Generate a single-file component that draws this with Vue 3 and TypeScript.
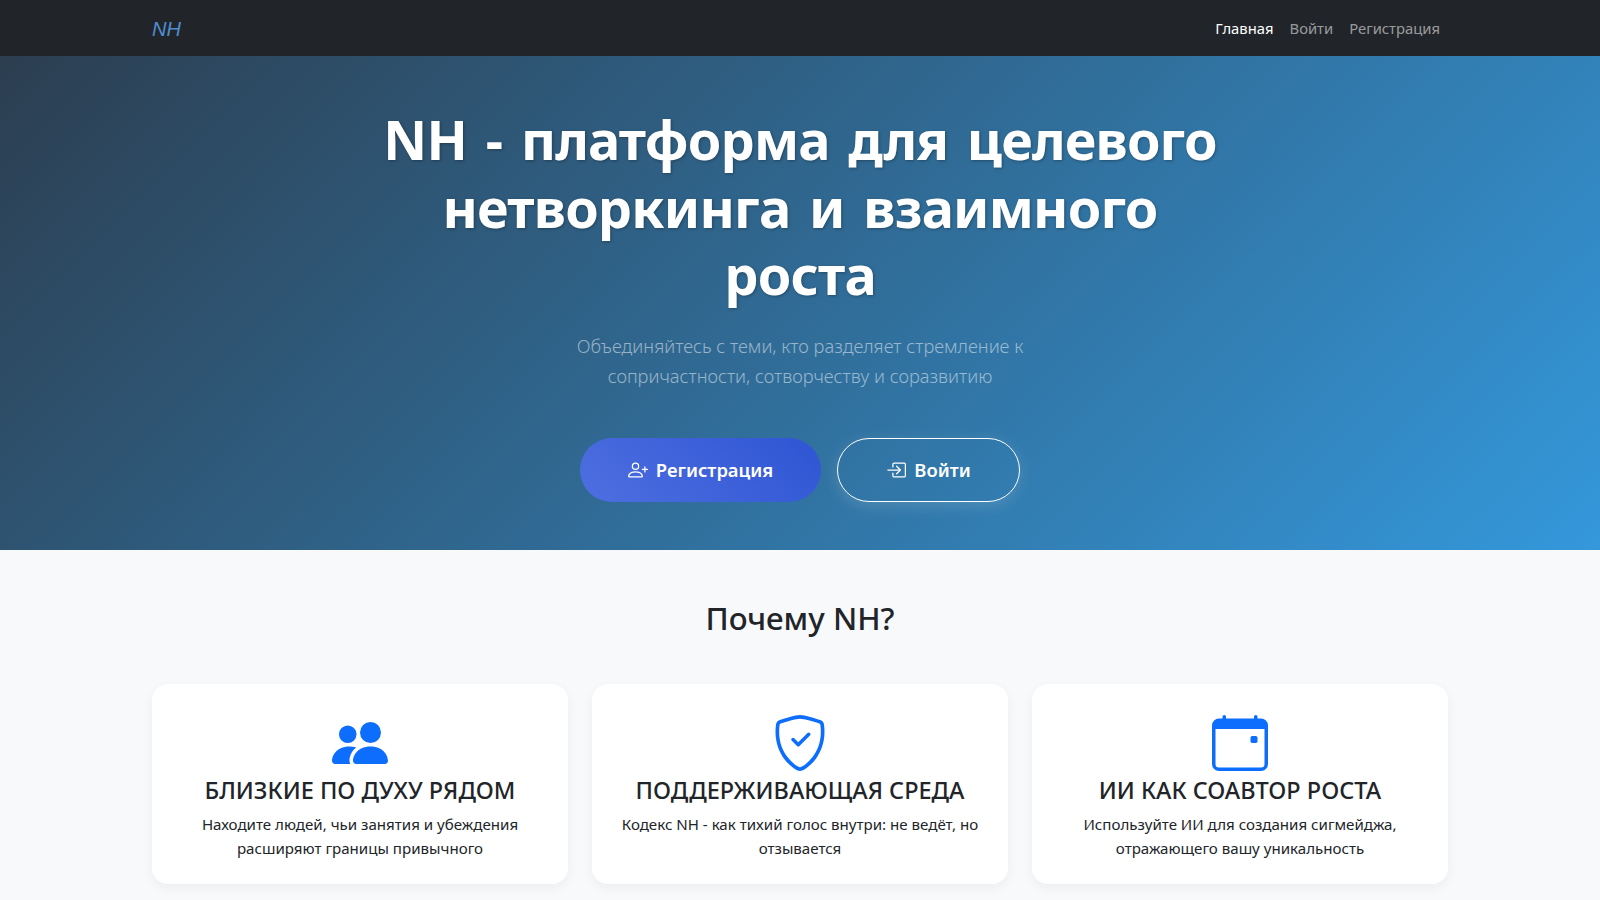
<template>
  <nav class="navbar">
    <div class="container nav-inner">
      <a class="brand" href="#">NH</a>
      <ul class="nav-links">
        <li v-for="link in links" :key="link.label">
          <a href="#" :class="{ active: link.active }">{{ link.label }}</a>
        </li>
      </ul>
    </div>
  </nav>

  <header class="hero">
    <h1>NH - платформа для целевого<br>нетворкинга и взаимного<br>роста</h1>
    <p class="lead">Объединяйтесь с теми, кто разделяет стремление к<br>сопричастности, сотворчеству и соразвитию</p>
    <div class="actions">
      <a class="btn btn-primary" href="#">
        <svg class="btn-icon" viewBox="0 0 16 16" fill="currentColor">
          <path d="M6 8a3 3 0 1 0 0-6 3 3 0 0 0 0 6zm2-3a2 2 0 1 1-4 0 2 2 0 0 1 4 0zm4 8c0 1-1 1-1 1H1s-1 0-1-1 1-4 6-4 6 3 6 4zm-1-.004c-.001-.246-.154-.986-.832-1.664C9.516 10.68 8.289 10 6 10c-2.29 0-3.516.68-4.168 1.332-.678.678-.83 1.418-.832 1.664h10z"/>
          <path fill-rule="evenodd" d="M13.5 5a.5.5 0 0 1 .5.5V7h1.5a.5.5 0 0 1 0 1H14v1.5a.5.5 0 0 1-1 0V8h-1.5a.5.5 0 0 1 0-1H13V5.5a.5.5 0 0 1 .5-.5z"/>
        </svg>
        Регистрация
      </a>
      <a class="btn btn-outline" href="#">
        <svg class="btn-icon" viewBox="0 0 16 16" fill="currentColor">
          <path fill-rule="evenodd" d="M6 3.5a.5.5 0 0 1 .5-.5h8a.5.5 0 0 1 .5.5v9a.5.5 0 0 1-.5.5h-8a.5.5 0 0 1-.5-.5v-2a.5.5 0 0 0-1 0v2A1.5 1.5 0 0 0 6.5 14h8a1.5 1.5 0 0 0 1.5-1.5v-9A1.5 1.5 0 0 0 14.5 2h-8A1.5 1.5 0 0 0 5 3.5v2a.5.5 0 0 0 1 0v-2z"/>
          <path fill-rule="evenodd" d="M11.854 8.354a.5.5 0 0 0 0-.708l-3-3a.5.5 0 1 0-.708.708L10.293 7.5H1.5a.5.5 0 0 0 0 1h8.793l-2.147 2.146a.5.5 0 0 0 .708.708l3-3z"/>
        </svg>
        Войти
      </a>
    </div>
  </header>

  <section class="features">
    <div class="container">
      <h2>Почему NH?</h2>
      <div class="cards">
        <div class="card">
          <svg class="card-icon" viewBox="0 0 16 16" fill="currentColor">
            <path d="M7 14s-1 0-1-1 1-4 5-4 5 3 5 4-1 1-1 1H7zm4-6a3 3 0 1 0 0-6 3 3 0 0 0 0 6z"/>
            <path d="M5.216 14A2.238 2.238 0 0 1 5 13c0-1.355.68-2.75 1.936-3.72A6.325 6.325 0 0 0 5 9c-4 0-5 3-5 4s1 1 1 1h4.216z"/>
            <path d="M4.5 8a2.5 2.5 0 1 0 0-5 2.5 2.5 0 0 0 0 5z"/>
          </svg>
          <h3>БЛИЗКИЕ ПО ДУХУ РЯДОМ</h3>
          <p>Находите людей, чьи занятия и убеждения<br>расширяют границы привычного</p>
        </div>
        <div class="card">
          <svg class="card-icon" viewBox="0 0 16 16" fill="currentColor">
            <path d="M5.338 1.59a61.44 61.44 0 0 0-2.837.856.481.481 0 0 0-.328.39c-.554 4.157.726 7.19 2.253 9.188a10.725 10.725 0 0 0 2.287 2.233c.346.244.652.42.893.533.12.057.218.095.293.118a.55.55 0 0 0 .101.025.615.615 0 0 0 .1-.025c.076-.023.174-.061.294-.118.24-.113.547-.29.893-.533a10.726 10.726 0 0 0 2.287-2.233c1.527-1.997 2.807-5.031 2.253-9.188a.48.48 0 0 0-.328-.39c-.651-.213-1.75-.56-2.837-.855C9.552 1.29 8.531 1.067 8 1.067c-.53 0-1.552.223-2.662.524zM5.072.56C6.157.265 7.31 0 8 0s1.843.265 2.928.56c1.11.3 2.229.655 2.887.87a1.54 1.54 0 0 1 1.044 1.262c.596 4.477-.787 7.795-2.465 9.99a11.775 11.775 0 0 1-2.517 2.453 7.159 7.159 0 0 1-1.048.625c-.28.132-.581.24-.829.24s-.548-.108-.829-.24a7.158 7.158 0 0 1-1.048-.625 11.777 11.777 0 0 1-2.517-2.453C1.928 10.487.545 7.169 1.141 2.692A1.54 1.54 0 0 1 2.185 1.43 62.456 62.456 0 0 1 5.072.56z"/>
            <path d="M10.854 5.146a.5.5 0 0 1 0 .708l-3 3a.5.5 0 0 1-.708 0l-1.5-1.5a.5.5 0 1 1 .708-.708L7.5 7.793l2.646-2.647a.5.5 0 0 1 .708 0z"/>
          </svg>
          <h3>ПОДДЕРЖИВАЮЩАЯ СРЕДА</h3>
          <p>Кодекс NH - как тихий голос внутри: не ведёт, но<br>отзывается</p>
        </div>
        <div class="card">
          <svg class="card-icon" viewBox="0 0 16 16" fill="currentColor">
            <path d="M11 6.5a.5.5 0 0 1 .5-.5h1a.5.5 0 0 1 .5.5v1a.5.5 0 0 1-.5.5h-1a.5.5 0 0 1-.5-.5v-1z"/>
            <path d="M3.5 0a.5.5 0 0 1 .5.5V1h8V.5a.5.5 0 0 1 1 0V1h1a2 2 0 0 1 2 2v11a2 2 0 0 1-2 2H2a2 2 0 0 1-2-2V3a2 2 0 0 1 2-2h1V.5a.5.5 0 0 1 .5-.5zM1 4v10a1 1 0 0 0 1 1h12a1 1 0 0 0 1-1V4H1z"/>
          </svg>
          <h3>ИИ КАК СОАВТОР РОСТА</h3>
          <p>Используйте ИИ для создания сигмейджа,<br>отражающего вашу уникальность</p>
        </div>
      </div>
    </div>
  </section>
</template>

<script setup lang="ts">
const links = [
  { label: 'Главная', active: true },
  { label: 'Войти', active: false },
  { label: 'Регистрация', active: false },
]
</script>

<style>
html, body {
  overflow: hidden;
}
body {
  background: #f8f9fa;
}
</style>

<style scoped>
* {
  box-sizing: border-box;
}

.container {
  width: 1320px;
  margin: 0 auto;
  padding: 0 12px;
}

.navbar {
  height: 56px;
  background: #212529;
  font-family: "Noto Sans", sans-serif;
}

.nav-inner {
  height: 100%;
  display: flex;
  align-items: center;
  justify-content: space-between;
}

.brand {
  padding-top: 2px;
  font-family: "Liberation Sans", sans-serif;
  font-style: italic;
  font-size: 20px;
  color: #4f8dd0;
  text-decoration: none;
}

.nav-links {
  display: flex;
  list-style: none;
  margin: 0;
  padding: 0;
}

.nav-links a {
  display: block;
  padding: 8px;
  font-size: 14.8px;
  color: rgba(255, 255, 255, 0.55);
  text-decoration: none;
}

.nav-links a.active {
  color: #fff;
}

.hero {
  height: 494px;
  padding-top: 50px;
  background: linear-gradient(135deg, #2c3e50, #3498db);
  text-align: center;
  color: #fff;
  font-family: "Noto Sans", sans-serif;
}

h1 {
  margin: 0 0 22px;
  font-size: 54px;
  font-weight: 700;
  line-height: 67.6px;
  letter-spacing: -0.8px;
  word-spacing: 5.5px;
  text-shadow: 1px 1px 3px rgba(0, 0, 0, 0.3);
}

.lead {
  margin: 0 0 47px;
  font-size: 18.3px;
  font-weight: 300;
  line-height: 30px;
  color: rgba(255, 255, 255, 0.5);
}

.actions {
  display: flex;
  justify-content: center;
  gap: 16px;
}

.btn {
  display: flex;
  align-items: center;
  justify-content: center;
  gap: 8px;
  height: 64px;
  border-radius: 32px;
  font-size: 18.4px;
  font-weight: 600;
  color: #fff;
  text-decoration: none;
}

.btn-primary {
  width: 241px;
  background: linear-gradient(45deg, #4e6fe0, #2f55d4);
}

.btn-outline {
  width: 183px;
  border: 1px solid #fff;
  box-shadow: 0 4px 15px rgba(255, 255, 255, 0.15);
}

.btn-icon {
  width: 20px;
  height: 20px;
}

.features {
  padding-top: 49px;
  height: 350px;
  background: #f8f9fa;
  font-family: "Noto Sans", sans-serif;
  color: #212529;
}

h2 {
  margin: 0 0 47px;
  font-size: 31.3px;
  font-weight: 500;
  line-height: 38px;
  text-align: center;
}

.cards {
  display: grid;
  grid-template-columns: repeat(3, 1fr);
  gap: 24px;
}

.card {
  height: 200px;
  padding: 31px 24px 0;
  background: #fff;
  border-radius: 16px;
  box-shadow: 0 4px 12px rgba(0, 0, 0, 0.05);
  text-align: center;
}

.card-icon {
  display: block;
  width: 56px;
  height: 56px;
  margin: 0 auto;
  color: #0d6efd;
}

h3 {
  margin: 5px 0 7px;
  font-size: 23.5px;
  font-weight: 500;
  line-height: 29px;
}

.card p {
  margin: 0;
  font-size: 15.1px;
  line-height: 24px;
}
</style>
